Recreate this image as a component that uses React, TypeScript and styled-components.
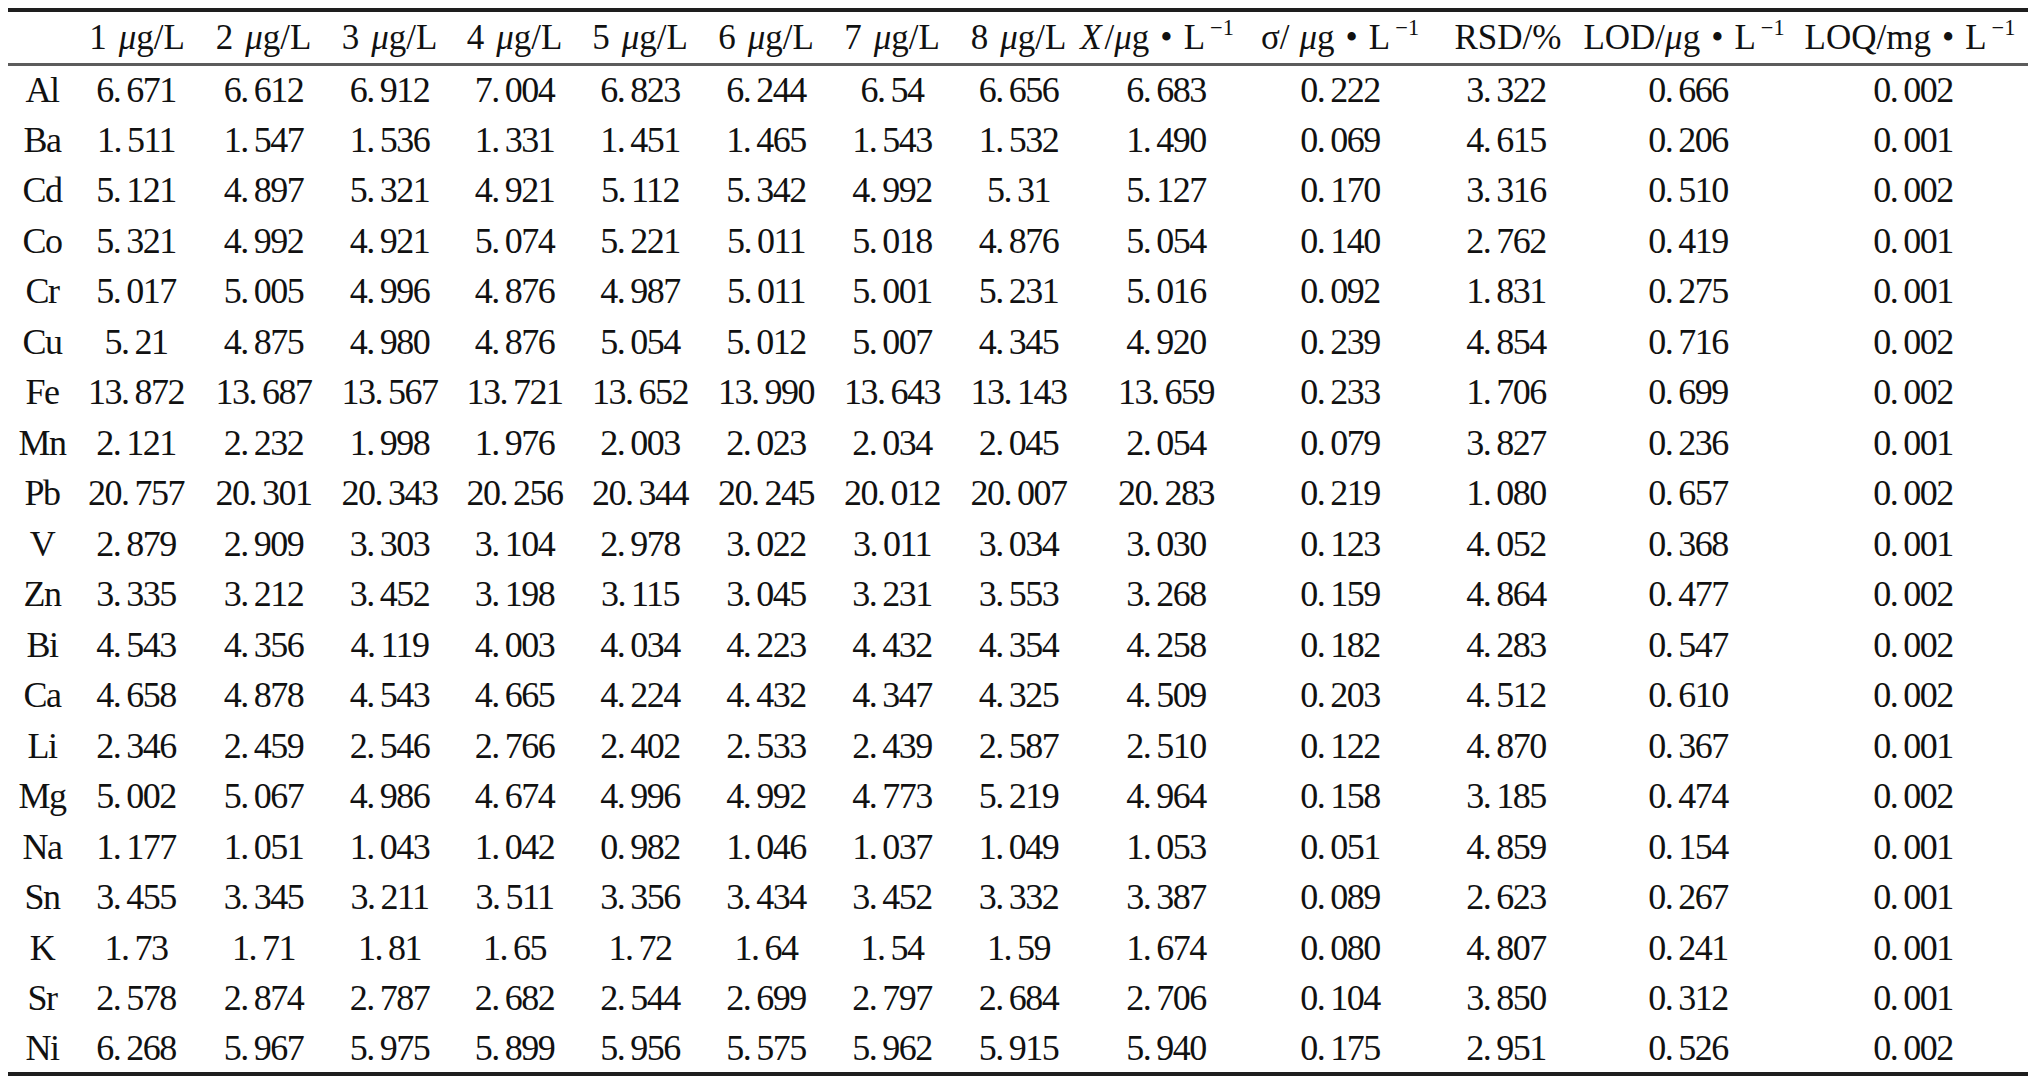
import React from "react";
import styled, { createGlobalStyle } from "styled-components";

const GlobalStyle = createGlobalStyle`
  html, body {
    margin: 0;
    padding: 0;
    background: #ffffff;
  }
  body {
    font-family: "Liberation Serif", "Noto Sans CJK SC", serif;
    color: #111111;
  }
`;

const Page = styled.div`
  padding: 8px 4px 0 8px;
  background: #ffffff;
`;

const Table = styled.table`
  width: 2020px;
  table-layout: fixed;
  border-collapse: collapse;
  border-top: 4px solid #1e1e1e;
  border-bottom: 4px solid #1e1e1e;
  font-family: "Liberation Serif", "Noto Sans CJK SC", serif;
  color: #111111;
`;

const HeadRow = styled.tr`
  height: 54px;
  border-bottom: 3px solid #5c5c5c;
`;

const BodyRow = styled.tr`
  height: 50.5px;
`;

const HeadCell = styled.th<{ $shift: number }>`
  padding: 0 ${(p) => Math.max(0, -2 * p.$shift)}px 0 ${(p) => Math.max(0, 2 * p.$shift)}px;
  font-weight: normal;
  font-size: 35px;
  line-height: 1;
  vertical-align: middle;
`;

const HeadLabel = styled.div`
  display: flex;
  justify-content: center;
  white-space: nowrap;
`;

const HeadText = styled.span`
  display: inline;
  white-space: nowrap;
`;

const Cell = styled.td<{ $shift: number }>`
  padding: 0 ${(p) => Math.max(0, -2 * p.$shift)}px 0 ${(p) => Math.max(0, 2 * p.$shift)}px;
  font-size: 36px;
  line-height: 1;
  letter-spacing: -1.5px;
  text-align: center;
  vertical-align: middle;
  white-space: nowrap;
`;

const Point = styled.span`
  margin-right: 6px;
`;

const Ital = styled.i`
  font-style: italic;
`;

const Gap = styled.span<{ $w: number }>`
  display: inline-block;
  width: ${(p) => p.$w}px;
`;

const Sup = styled.sup`
  font-size: 0.64em;
  line-height: 0;
  vertical-align: 0.62em;
  margin-left: 5px;
`;

const Dot = styled.span`
  margin: 0 11px;
`;

const cols = [
  { w: 78, s: -5, hs: -5 },
  { w: 114, s: -7, hs: -6 },
  { w: 127, s: 0, hs: 0 },
  { w: 125, s: 0, hs: 0 },
  { w: 125, s: 0, hs: 0 },
  { w: 126, s: 0, hs: 0 },
  { w: 126, s: 0, hs: 0 },
  { w: 126, s: 0, hs: 0 },
  { w: 135, s: -4, hs: -4 },
  { w: 160, s: -4, hs: -13 },
  { w: 174, s: 3, hs: 3 },
  { w: 174, s: -5, hs: -3 },
  { w: 202, s: -11, hs: -15 },
  { w: 228, s: -1, hs: -4 },
];

const Unit = ({ n }: { n: number }) => (
  <HeadText>
    {n}
    <Gap $w={12} />
    <Ital>μ</Ital>g/L
  </HeadText>
);

const PerL = () => (
  <>
    <Dot>•</Dot>L<Sup>−1</Sup>
  </>
);

const headers: React.ReactNode[] = [
  "",
  <Unit n={1} />,
  <Unit n={2} />,
  <Unit n={3} />,
  <Unit n={4} />,
  <Unit n={5} />,
  <Unit n={6} />,
  <Unit n={7} />,
  <Unit n={8} />,
  <HeadText>
    <Ital>X</Ital>
    <Gap $w={3} />/<Ital>μ</Ital>g
    <PerL />
  </HeadText>,
  <HeadText>
    σ/<Gap $w={10} />
    <Ital>μ</Ital>g
    <PerL />
  </HeadText>,
  <HeadText>RSD/%</HeadText>,
  <HeadText>
    LOD/<Ital>μ</Ital>g
    <PerL />
  </HeadText>,
  <HeadText>
    LOQ/mg
    <PerL />
  </HeadText>,
];

const rows: string[][] = [
  ["Al", "6.671", "6.612", "6.912", "7.004", "6.823", "6.244", "6.54", "6.656", "6.683", "0.222", "3.322", "0.666", "0.002"],
  ["Ba", "1.511", "1.547", "1.536", "1.331", "1.451", "1.465", "1.543", "1.532", "1.490", "0.069", "4.615", "0.206", "0.001"],
  ["Cd", "5.121", "4.897", "5.321", "4.921", "5.112", "5.342", "4.992", "5.31", "5.127", "0.170", "3.316", "0.510", "0.002"],
  ["Co", "5.321", "4.992", "4.921", "5.074", "5.221", "5.011", "5.018", "4.876", "5.054", "0.140", "2.762", "0.419", "0.001"],
  ["Cr", "5.017", "5.005", "4.996", "4.876", "4.987", "5.011", "5.001", "5.231", "5.016", "0.092", "1.831", "0.275", "0.001"],
  ["Cu", "5.21", "4.875", "4.980", "4.876", "5.054", "5.012", "5.007", "4.345", "4.920", "0.239", "4.854", "0.716", "0.002"],
  ["Fe", "13.872", "13.687", "13.567", "13.721", "13.652", "13.990", "13.643", "13.143", "13.659", "0.233", "1.706", "0.699", "0.002"],
  ["Mn", "2.121", "2.232", "1.998", "1.976", "2.003", "2.023", "2.034", "2.045", "2.054", "0.079", "3.827", "0.236", "0.001"],
  ["Pb", "20.757", "20.301", "20.343", "20.256", "20.344", "20.245", "20.012", "20.007", "20.283", "0.219", "1.080", "0.657", "0.002"],
  ["V", "2.879", "2.909", "3.303", "3.104", "2.978", "3.022", "3.011", "3.034", "3.030", "0.123", "4.052", "0.368", "0.001"],
  ["Zn", "3.335", "3.212", "3.452", "3.198", "3.115", "3.045", "3.231", "3.553", "3.268", "0.159", "4.864", "0.477", "0.002"],
  ["Bi", "4.543", "4.356", "4.119", "4.003", "4.034", "4.223", "4.432", "4.354", "4.258", "0.182", "4.283", "0.547", "0.002"],
  ["Ca", "4.658", "4.878", "4.543", "4.665", "4.224", "4.432", "4.347", "4.325", "4.509", "0.203", "4.512", "0.610", "0.002"],
  ["Li", "2.346", "2.459", "2.546", "2.766", "2.402", "2.533", "2.439", "2.587", "2.510", "0.122", "4.870", "0.367", "0.001"],
  ["Mg", "5.002", "5.067", "4.986", "4.674", "4.996", "4.992", "4.773", "5.219", "4.964", "0.158", "3.185", "0.474", "0.002"],
  ["Na", "1.177", "1.051", "1.043", "1.042", "0.982", "1.046", "1.037", "1.049", "1.053", "0.051", "4.859", "0.154", "0.001"],
  ["Sn", "3.455", "3.345", "3.211", "3.511", "3.356", "3.434", "3.452", "3.332", "3.387", "0.089", "2.623", "0.267", "0.001"],
  ["K", "1.73", "1.71", "1.81", "1.65", "1.72", "1.64", "1.54", "1.59", "1.674", "0.080", "4.807", "0.241", "0.001"],
  ["Sr", "2.578", "2.874", "2.787", "2.682", "2.544", "2.699", "2.797", "2.684", "2.706", "0.104", "3.850", "0.312", "0.001"],
  ["Ni", "6.268", "5.967", "5.975", "5.899", "5.956", "5.575", "5.962", "5.915", "5.940", "0.175", "2.951", "0.526", "0.002"],
];

const Num = ({ v }: { v: string }) => {
  const i = v.indexOf(".");
  if (i < 0) return <>{v}</>;
  return (
    <>
      {v.slice(0, i)}
      <Point>.</Point>
      {v.slice(i + 1)}
    </>
  );
};

export default function App() {
  return (
    <Page>
      <GlobalStyle />
      <Table>
        <colgroup>
          {cols.map((c, i) => (
            <col key={i} style={{ width: c.w }} />
          ))}
        </colgroup>
        <thead>
          <HeadRow>
            {headers.map((h, i) => (
              <HeadCell key={i} $shift={cols[i].hs}>
                <HeadLabel>{h}</HeadLabel>
              </HeadCell>
            ))}
          </HeadRow>
        </thead>
        <tbody>
          {rows.map((r) => (
            <BodyRow key={r[0]}>
              {r.map((v, i) => (
                <Cell key={i} $shift={cols[i].s}>
                  <Num v={v} />
                </Cell>
              ))}
            </BodyRow>
          ))}
        </tbody>
      </Table>
    </Page>
  );
}
